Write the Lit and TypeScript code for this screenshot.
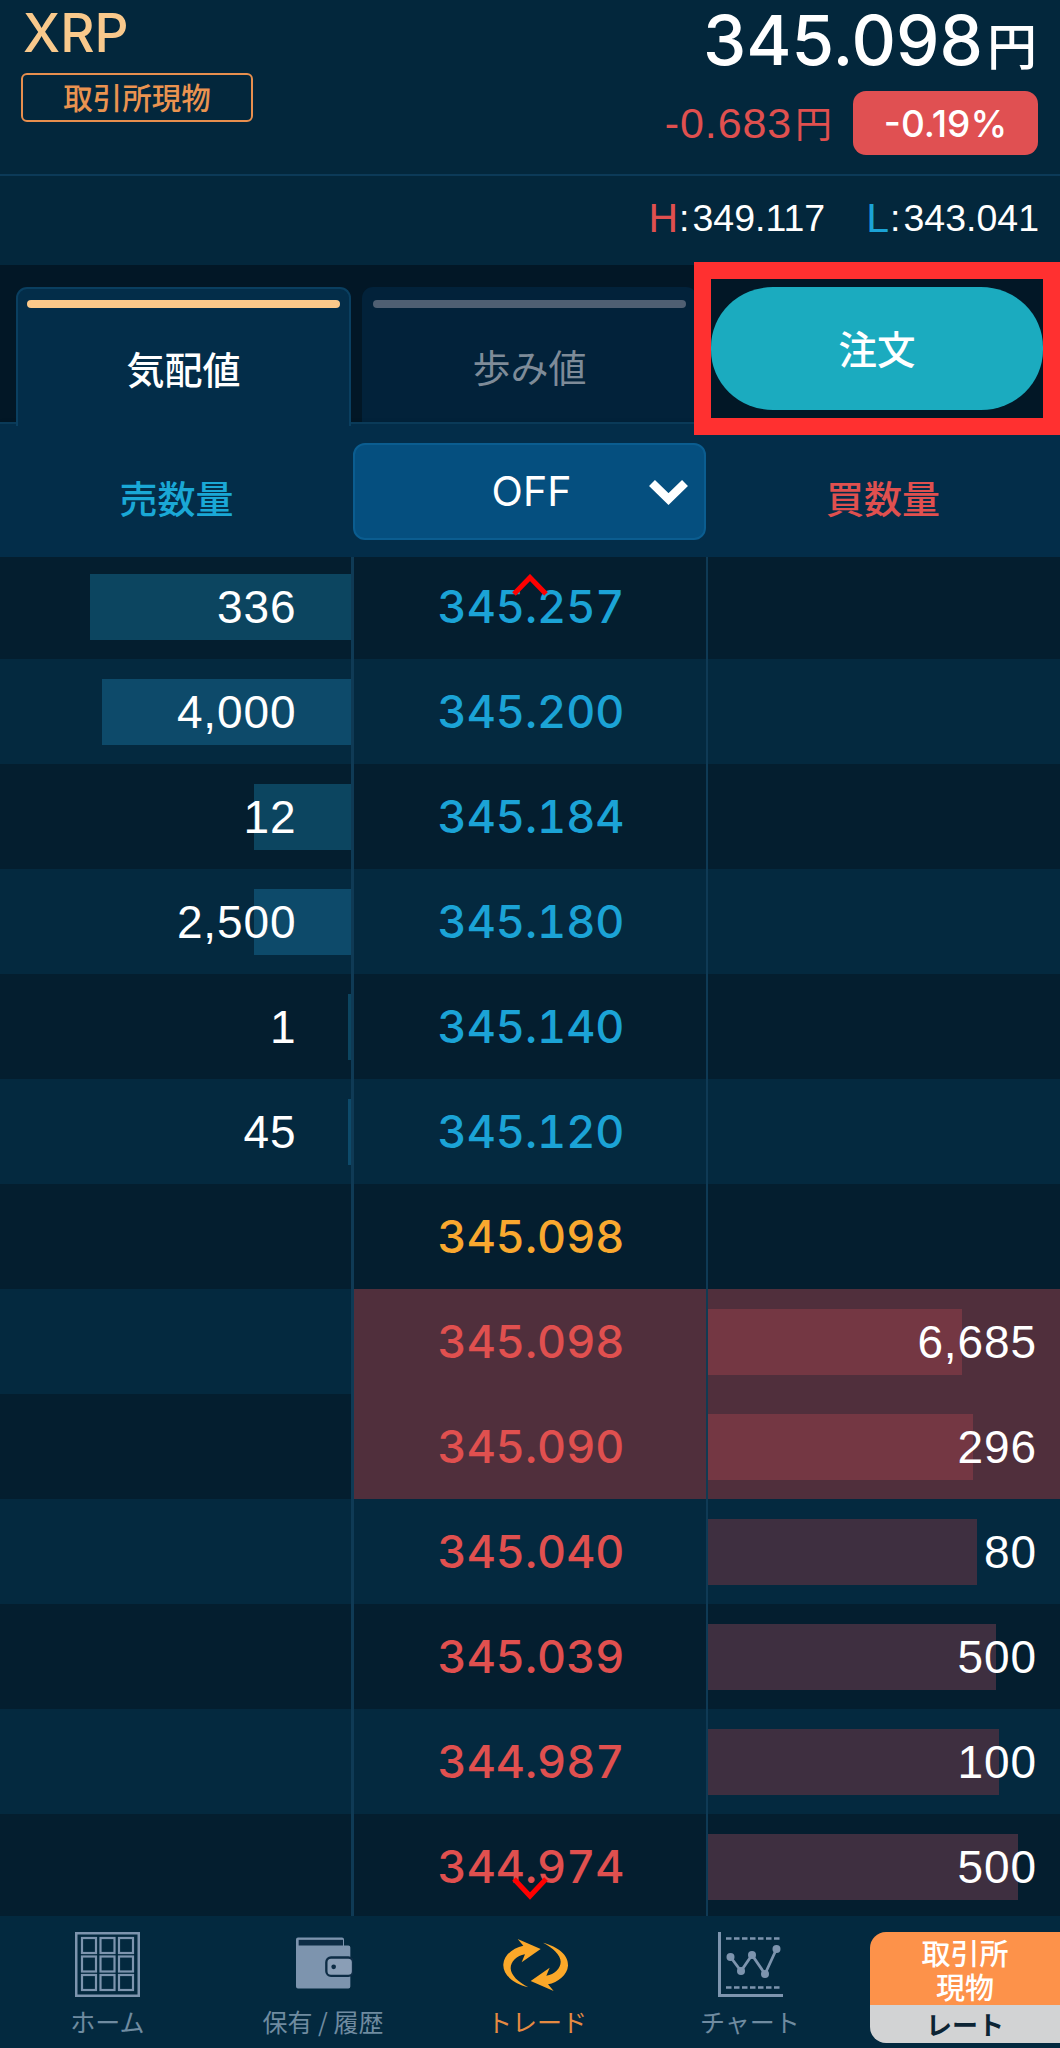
import { LitElement, html, css, svg } from "lit";
import { customElement } from "lit/decorators.js";
import { styleMap } from "lit/directives/style-map.js";

type Row = { price: string; kind: "ask" | "last" | "bid"; sell?: string; sellBar?: number; buy?: string; buyBar?: number; hi?: boolean };

const rows: Row[] = [
  { price: "345.257", kind: "ask", sell: "336", sellBar: 261 },
  { price: "345.200", kind: "ask", sell: "4,000", sellBar: 249 },
  { price: "345.184", kind: "ask", sell: "12", sellBar: 97 },
  { price: "345.180", kind: "ask", sell: "2,500", sellBar: 97 },
  { price: "345.140", kind: "ask", sell: "1", sellBar: 3 },
  { price: "345.120", kind: "ask", sell: "45", sellBar: 3 },
  { price: "345.098", kind: "last" },
  { price: "345.098", kind: "bid", buy: "6,685", buyBar: 254, hi: true },
  { price: "345.090", kind: "bid", buy: "296", buyBar: 265, hi: true },
  { price: "345.040", kind: "bid", buy: "80", buyBar: 269 },
  { price: "345.039", kind: "bid", buy: "500", buyBar: 288 },
  { price: "344.987", kind: "bid", buy: "100", buyBar: 291 },
  { price: "344.974", kind: "bid", buy: "500", buyBar: 310 },
];

@customElement("app-root")
export class AppRoot extends LitElement {
  static styles = css`
    :host { display: block; width: 1060px; height: 2048px; position: relative; overflow: hidden; background: #021726; color: #fff; font-family: "Liberation Sans", "Noto Sans CJK JP", sans-serif; }
    .jp { font-family: "Noto Sans CJK JP", "Noto Sans", sans-serif; }

    .top { height: 174px; background: #03273c; display: flex; justify-content: space-between; border-bottom: 2px solid #0c3a58; box-sizing: content-box; }
    .top-left { padding: 3px 0 0 21px; display: flex; flex-direction: column; align-items: flex-start; }
    .sym { font-family: Inter, sans-serif; font-weight: 500; font-size: 53px; line-height: 60px; color: #f9c98c; margin: 0 0 0 2px; }
    .tag { margin-top: 10px; width: 232px; height: 49px; box-sizing: border-box; border: 2.5px solid #e88f4e; border-radius: 6px; color: #ea9350; font-size: 29.5px; font-weight: 500; display: flex; align-items: center; justify-content: center; line-height: 1; padding-bottom: 1px; }
    .top-right { padding: 0 22px 0 0; display: flex; flex-direction: column; align-items: flex-end; }
    .last { display: flex; align-items: baseline; height: 75px; margin-top: 5px; margin-right: 1px; line-height: 70px; }
    .last b { font-family: Inter, sans-serif; font-weight: 500; font-size: 69px; letter-spacing: 0; }
    .last span { font-size: 50px; font-weight: 500; margin-left: 4px; }
    .chg { display: flex; align-items: center; margin-top: 11px; }
    .chg-val { color: #e0504f; font-size: 43px; letter-spacing: 0.9px; display: flex; align-items: baseline; margin-right: 20px; padding-bottom: 3px; }
    .chg-val span { font-size: 37px; margin-left: 3px; }
    .pct { width: 185px; height: 64px; border-radius: 13px; background: #e05052; font-family: Inter, sans-serif; font-weight: 500; font-size: 37px; display: flex; align-items: center; justify-content: center; }

    .hl { height: 89px; background: #03273c; display: flex; align-items: center; justify-content: flex-end; padding-right: 21px; font-size: 37.5px; padding-bottom: 5px; box-sizing: border-box; }
    .hl .k { font-size: 41px; }
    .hl .h { color: #e0504f; }
    .hl .l { color: #1ba3d6; margin-left: 41px; }
    .hl .c { margin: 0 3px 0 1px; }

    .tabs { height: 159px; background: #021726; padding: 22px 0 0 16px; box-sizing: border-box; display: flex; gap: 11px; }
    .tab { box-sizing: border-box; height: 137px; border-radius: 11px 11px 0 0; display: flex; flex-direction: column; align-items: center; padding: 13px 11px 0; }
    .tab .bar { height: 8px; width: 100%; border-radius: 4px; flex: none; }
    .tab .t { font-size: 38px; line-height: 54px; }
    .tab.on { width: 335px; height: 139px; position: relative; z-index: 1; background: #032d49; border: solid #0a3f60; border-width: 2px 2px 0; padding: 11px 9px 0; }
    .tab.on .bar { background: #fcc98a; }
    .tab.on .t { font-weight: 500; color: #fff; margin-top: 33px; }
    .tab.off { width: 335px; background: #02223a; }
    .tab.off .bar { background: #4f5f72; }
    .tab.off .t { color: #7e8b98; margin-top: 31px; }

    .sub { height: 135px; background: #032d49; border-top: 2px solid #0a3a58; margin-top: -2px; box-sizing: border-box; display: grid; grid-template-columns: 353px 353px 1fr; align-items: center; position: relative; font-size: 38px; font-weight: 500; box-shadow: 0 2px 5px rgba(0,0,0,.25); }
    .sub .s { color: #1aa8d6; text-align: center; padding: 13px 0 0 0; line-height: 1; }
    .sub .b { color: #e0504f; text-align: center; padding-top: 13px; line-height: 1; }
    .sel { height: 97px; margin-top: 2px; box-sizing: border-box; background: #054f7f; border: 2px solid #0b5d90; border-radius: 12px; position: relative; display: flex; align-items: center; justify-content: center; font-family: Inter, sans-serif; font-weight: 400; font-size: 41px; color: #fff; padding-left: 4px; padding-bottom: 2px; }
    .sel svg { position: absolute; left: 290px; top: 31px; }

    .table { height: 1359px; overflow: hidden; position: relative; }
    .rows { margin-top: -3px; }
    .row { height: 105px; display: grid; grid-template-columns: 351px 3px 352px 2px 1fr; background: #041e2f; }
    .row.alt { background: #04293f; }
    .vl { background: #0f3a55; }
    .cell { display: grid; height: 105px; align-items: center; }
    .cell > * { grid-area: 1 / 1; }
    .qty { font-size: 46px; letter-spacing: 0.9px; color: #fff; line-height: 1; }
    .sell { justify-items: end; }
    .sell .qty { padding-right: 54.5px; justify-self: end; }
    .sell .fill { height: 66px; background: #0c4560; }
    .row.alt .sell .fill { background: #0d4a6a; }
    .buy { justify-items: start; }
    .buy .qty { justify-self: end; padding-right: 23px; }
    .buy .fill { height: 66px; background: #3e2f40; }
    .price { text-align: center; font-family: Inter, sans-serif; font-variant-numeric: tabular-nums; font-weight: 500; font-size: 45px; line-height: 1; padding-left: 2px; }
    .ask { color: #1ba3d6; }
    .lastp { color: #f9a82f; }
    .bid { color: #e0504f; }
    .hi { background: #502f3c; }
    .hi .fill { background: #743743; }
    .vl.red { background: #123a52; }

    .arrow { position: absolute; left: 510px; }

    .foot { height: 132px; background: #03293f; display: grid; grid-template-columns: 215px 216px 212px 212px 1fr; }
    .nav { display: flex; flex-direction: column; align-items: center; color: #6f8ba0; font-size: 25px; line-height: 1; }
    .nav.chart-nav { padding-left: 2px; }
    .nav .ic { height: 84px; width: 100px; display: flex; justify-content: center; padding-top: 16px; box-sizing: border-box; }
    .nav .ic svg { flex: none; }
    .nav .lb { margin-top: 9px; white-space: nowrap; }
    .nav.cur { color: #e58a42; }
    .badge { margin: 16px 0 0 15px; height: 111px; border-radius: 16px 0 0 16px; overflow: hidden; display: flex; flex-direction: column; }
    .badge .a { height: 73px; background: #fd924a; color: #fff; font-weight: 500; font-size: 29px; line-height: 34px; text-align: center; padding-top: 3px; box-sizing: border-box; }
    .badge .r { flex: 1; background: #d2d3d4; color: #0c2434; font-weight: 700; font-size: 26px; line-height: 38px; text-align: center; }

    .mark { position: absolute; left: 694px; top: 262px; width: 366px; height: 173px; box-sizing: border-box; border: 17px solid #ff3030; background: #021726; padding-top: 8px; }
    .order { height: 123px; border-radius: 62px / 60px; background: #1babbf; display: flex; align-items: center; justify-content: center; color: #fff; font-size: 38.5px; font-weight: 500; padding-bottom: 3px; box-sizing: border-box; }
    .trade-svg { margin-top: -7px; margin-left: 6px; }
    .wallet-svg { margin-top: 5px; margin-left: 2px; }
    .chart-svg { margin-left: 2px; }
  `;

  private renderRow(r: Row, i: number) {
    const cls = r.kind === "ask" ? "ask" : r.kind === "last" ? "lastp" : "bid";
    return html`<div class="row ${i % 2 ? "alt" : ""}">
      <div class="cell sell">
        ${r.sellBar ? html`<div class="fill" style=${styleMap({ width: r.sellBar + "px" })}></div>` : ""}
        ${r.sell ? html`<div class="qty">${r.sell}</div>` : ""}
      </div>
      <div class="vl"></div>
      <div class="cell ${r.hi ? "hi" : ""}"><div class="price ${cls}">${r.price}</div></div>
      <div class="vl ${r.hi ? "red" : ""}"></div>
      <div class="cell buy ${r.hi ? "hi" : ""}">
        ${r.buyBar ? html`<div class="fill" style=${styleMap({ width: r.buyBar + "px" })}></div>` : ""}
        ${r.buy ? html`<div class="qty">${r.buy}</div>` : ""}
      </div>
    </div>`;
  }

  render() {
    return html`
      <div class="top">
        <div class="top-left">
          <div class="sym">XRP</div>
          <div class="tag jp">取引所現物</div>
        </div>
        <div class="top-right">
          <div class="last"><b>345.098</b><span class="jp">円</span></div>
          <div class="chg">
            <div class="chg-val">-0.683<span class="jp">円</span></div>
            <div class="pct">-0.19%</div>
          </div>
        </div>
      </div>
      <div class="hl">
        <span class="k h">H</span><span class="c">:</span>349.117
        <span class="k l">L</span><span class="c">:</span>343.041
      </div>
      <div class="tabs jp">
        <div class="tab on"><div class="bar"></div><div class="t">気配値</div></div>
        <div class="tab off"><div class="bar"></div><div class="t">歩み値</div></div>
      </div>
      <div class="sub jp">
        <div class="s">売数量</div>
        <div class="sel">OFF
          <svg width="46" height="32" viewBox="0 0 46 32"><path d="M7 7 L23.5 23 L40 7" fill="none" stroke="#fff" stroke-width="8.5"/></svg>
        </div>
        <div class="b">買数量</div>
      </div>
      <div class="table">
        <div class="rows">${rows.map((r, i) => this.renderRow(r, i))}</div>
        <svg class="arrow" style="top:17px" width="40" height="22" viewBox="0 0 40 22"><path d="M4 20 L20 3.5 L36 20" fill="none" stroke="#ff0000" stroke-width="5"/></svg>
        <svg class="arrow" style="top:1320px" width="40" height="24" viewBox="0 0 40 24"><path d="M4 2 L20 19 L36 2" fill="none" stroke="#ff0000" stroke-width="5"/></svg>
      </div>
      <div class="foot jp">
        <div class="nav"><div class="ic">${this.home()}</div><div class="lb">ホーム</div></div>
        <div class="nav"><div class="ic">${this.wallet()}</div><div class="lb">保有 / 履歴</div></div>
        <div class="nav cur"><div class="ic">${this.trade()}</div><div class="lb">トレード</div></div>
        <div class="nav chart-nav"><div class="ic">${this.chart()}</div><div class="lb">チャート</div></div>
        <div class="badge"><div class="a">取引所<br />現物</div><div class="r">レート</div></div>
      </div>
      <div class="mark jp"><div class="order">注文</div></div>
    `;
  }

  private home() {
    const xs = [7, 25.5, 44];
    const ys = [6, 24.5, 43];
    return html`<svg width="65" height="65" viewBox="0 0 65 65" fill="none" stroke="#7d94ae">
      <rect x="1.25" y="1.25" width="62.5" height="62.5" stroke-width="2.5" />
      ${ys.map((y) => xs.map((x) => svg`<rect x=${x} y=${y} width="14" height="15" stroke-width="2.2" />`))}
    </svg>`;
  }

  private wallet() {
    return html`<svg class="wallet-svg" width="57" height="53" viewBox="44 40 171 156">
      <path fill="#7d94ae" d="M50 40 H182 Q188 40 188 46 V64 H201 Q207 64 207 70 V187 Q207 193 201 193 H50 Q44 193 44 187 V46 Q44 40 50 40Z" />
      <rect x="52" y="47" width="133" height="17" fill="#0d2c45" />
      <rect x="135" y="100" width="80" height="55" rx="14" fill="#8a9eb6" stroke="#0d2c45" stroke-width="7" />
      <circle cx="157" cy="128" r="7" fill="#0d2c45" />
    </svg>`;
  }

  private trade() {
    const d = "M115 187 C70 175 38 150 40 118 C42 90 70 68 100 62 L83 42 L152 72 L95 112 L105 88 C80 92 62 110 62 130 C62 150 85 172 115 187Z";
    return html`<svg class="trade-svg" width="100" height="80" viewBox="0 0 300 240">
      <path fill="#fba829" d=${d} />
      <path fill="#fba829" d=${d} transform="rotate(180 137 120)" />
    </svg>`;
  }

  private chart() {
    const pts: [number, number][] = [[12.5, 25], [23, 39], [34, 23], [47, 42], [58.5, 17]];
    return html`<svg class="chart-svg" width="66" height="66" viewBox="0 0 66 66" fill="none" stroke="#7d94ae">
      <path d="M1.5 0 V63.5 H65" stroke-width="3" />
      <path d="M8 6.5 H63 M8 55.5 H63" stroke-width="2.5" stroke-dasharray="5.5 2.5" />
      <polyline points=${pts.map((p) => p.join(",")).join(" ")} stroke-width="2.8" />
      ${pts.map((p) => svg`<circle cx=${p[0]} cy=${p[1]} r="4" fill="#7d94ae" stroke="none" />`)}
    </svg>`;
  }
}
